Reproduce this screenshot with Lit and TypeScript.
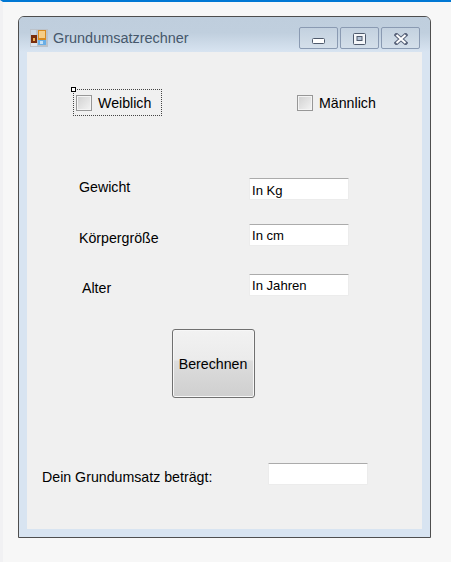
import { LitElement, html, css } from "lit";
import { customElement } from "lit/decorators.js";

@customElement("app-root")
export class AppRoot extends LitElement {
  static styles = css`
    :host {
      display: block;
      width: 451px;
      height: 562px;
      overflow: hidden;
      box-sizing: border-box;
      background: #f7f7f7;
      border-top: 2px solid #0078d4;
      border-left: 3px solid #f1f1f3;
      padding: 14px 0 0 15px;
      font-family: "Liberation Sans", Arial, sans-serif;
      font-size: 14.2px;
      color: #000;
    }
    .window {
      box-sizing: border-box;
      width: 413px;
      height: 522px;
      border: 1px solid #4e4e4e;
      border-radius: 6px 6px 0 0;
      background: #d8e4f1;
      padding: 0 8px 8px 8px;
      display: flex;
      flex-direction: column;
    }
    .titlebar {
      height: 35px;
      flex: none;
      margin: 0 -8px;
      padding: 0 10px 0 11px;
      border-radius: 5px 5px 0 0;
      background: linear-gradient(#bfcedd 0, #c0cfde 45%, #d8e4f1 100%);
      display: flex;
      align-items: center;
    }
    .app-icon { flex: none; margin-top: 6px; }
    .title {
      margin: 6px 0 0 5px;
      font-size: 14.45px;
      color: #46586c;
      flex: 1;
    }
    .caps { display: flex; gap: 2px; margin-top: 7px; }
    .cap {
      box-sizing: border-box;
      width: 39px;
      height: 22px;
      border: 1px solid #8a9ab2;
      border-radius: 2px;
      background: linear-gradient(#c3d1df, #d4dfea);
      display: flex;
      align-items: center;
      justify-content: center;
    }
    .glyph-min { margin-top: 6px; }
    .glyph-max, .glyph-close { margin-top: 1px; }
    .client {
      flex: 1;
      background: #f0f0f0;
      display: flex;
      flex-direction: column;
    }
    .checks {
      display: flex;
      padding: 37px 0 0 46px;
      height: 27px;
      flex: none;
    }
    .check {
      position: relative;
      box-sizing: border-box;
      display: flex;
      align-items: center;
      height: 27px;
      width: 89px;
      padding-left: 3px;
      gap: 6px;
    }
    .check.focus { outline: 1px dotted #444; outline-offset: -1px; }
    .check.male { margin-left: 132px; width: 90px; }
    .handle {
      position: absolute;
      left: -2px;
      top: -2px;
      width: 3px;
      height: 3px;
      border: 1px solid #000;
      background: #fff;
    }
    .box {
      box-sizing: border-box;
      width: 16px;
      height: 16px;
      flex: none;
      border: 1px solid #979797;
      box-shadow: inset 0 0 0 1px #f4f4f4;
      background: linear-gradient(135deg, #d0d0d0, #f4f4f4);
    }
    .rows {
      display: flex;
      flex-direction: column;
      padding: 62px 0 0 0;
    }
    .row {
      display: flex;
      align-items: flex-start;
      height: 22px;
      margin-bottom: 24px;
      padding-left: 52px;
    }
    .row + .row { margin-bottom: 28px; }
    .row:last-child { margin-bottom: 0; }
    .row > span { width: 170px; flex: none; }
    .row.weight > span { padding-top: 1px; }
    .row.height > span { padding-top: 6px; }
    .row.age > span { padding-top: 6px; padding-left: 3px; width: 167px; }
    .field {
      box-sizing: border-box;
      width: 100px;
      height: 22px;
      flex: none;
      background: #fff;
      border: 1px solid #ececec;
      border-top-color: #ababab;
      border-radius: 1px;
      padding: 0 2px;
      line-height: 22px;
      font-size: 13.1px;
    }
    .weight .field { line-height: 24px; }
    .action { padding: 33px 0 0 145px; flex: none; }
    .button {
      box-sizing: border-box;
      display: flex;
      align-items: center;
      justify-content: center;
      width: 83px;
      height: 69px;
      padding: 0 1px 0 0;
      border: 1px solid #707070;
      border-radius: 3px;
      box-shadow: inset 0 0 0 1px #f7f7f7;
      background: linear-gradient(#f2f2f2 0, #ebebeb 45%, #dddddd 46%, #cfcfcf 100%);
      color: #000;
      font: inherit;
    }
    .result {
      display: flex;
      align-items: flex-start;
      padding: 65px 0 0 15px;
    }
    .result > span { width: 226px; flex: none; padding-top: 6px; }
  `;

  render() {
    return html`
      <div class="window">
        <div class="titlebar">
          <svg class="app-icon" width="18" height="18" viewBox="0 0 18 18">
            <rect width="18" height="18" fill="#bcc2c9"/>
            <rect x="1" y="1" width="5" height="5" fill="#c9d6e4"/>
            <rect x="1" y="6" width="6" height="8" fill="#7a2d0c"/>
            <rect x="3" y="9" width="2" height="3" fill="#f0b050"/>
            <rect x="1" y="14" width="3" height="3" fill="#dde3ea"/>
            <rect x="4" y="14" width="3" height="3" fill="#dde3ea"/>
            <rect x="8" y="1" width="8" height="10" fill="#d98a1e"/>
            <rect x="9" y="2" width="6" height="7" fill="#f6cd85"/>
            <rect x="8" y="11" width="8" height="5" fill="#69aee6"/>
            <rect x="10" y="12" width="3" height="3" fill="#c5e2f8"/>
          </svg>
          <span class="title">Grundumsatzrechner</span>
          <div class="caps">
            <div class="cap">
              <svg class="glyph-min" width="13" height="6" viewBox="0 0 13 6">
                <rect x="0.5" y="0.5" width="12" height="5" rx="1" fill="#fff" stroke="#4f5a6c"/>
              </svg>
            </div>
            <div class="cap">
              <svg class="glyph-max" width="13" height="12" viewBox="0 0 13 12">
                <rect x="0.5" y="0.5" width="12" height="11" rx="1" fill="#f4f6f9" stroke="#4f5a6c"/>
                <rect x="4" y="3.5" width="5" height="4" fill="#b5c3d6" stroke="#4f5a6c" stroke-width="1"/>
              </svg>
            </div>
            <div class="cap">
              <svg class="glyph-close" width="14" height="12" viewBox="0 0 14 12">
                <path d="M2.5 2l9 8M11.5 2l-9 8" stroke="#59637a" stroke-width="4" stroke-linecap="square"/>
                <path d="M2.5 2l9 8M11.5 2l-9 8" stroke="#fff" stroke-width="2"/>
              </svg>
            </div>
          </div>
        </div>
        <div class="client">
          <div class="checks">
            <div class="check focus"><i class="handle"></i><i class="box"></i><span>Weiblich</span></div>
            <div class="check male"><i class="box"></i><span>Männlich</span></div>
          </div>
          <div class="rows">
            <div class="row weight"><span>Gewicht</span><div class="field">In Kg</div></div>
            <div class="row height"><span>Körpergröße</span><div class="field">In cm</div></div>
            <div class="row age"><span>Alter</span><div class="field">In Jahren</div></div>
          </div>
          <div class="action"><button class="button">Berechnen</button></div>
          <div class="result"><span>Dein Grundumsatz beträgt:</span><div class="field"></div></div>
        </div>
      </div>
    `;
  }
}
